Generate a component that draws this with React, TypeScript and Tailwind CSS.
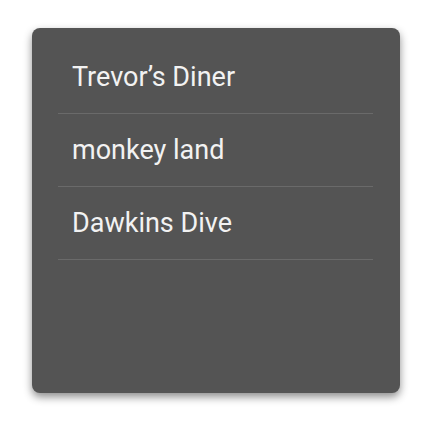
const places = ['Trevor’s Diner', 'monkey land', 'Dawkins Dive'];

export default function App() {
  return (
    <div className="w-[432px] h-[432px] bg-white pt-[28px] pl-[32px]" style={{ fontFamily: 'Roboto, sans-serif' }}>
      <div className="w-[368px] h-[365px] bg-[#545454] rounded-[8px] shadow-[0_4px_8px_rgba(0,0,0,0.45)] pt-[13px] pl-[26px] pr-[27px]">
        {places.map((name) => (
          <div key={name} className="h-[73px] border-b border-[#6a6a6a] flex items-center pl-[14px]">
            <span className="text-[27px] text-[#f2f2f2] leading-none">{name}</span>
          </div>
        ))}
      </div>
    </div>
  );
}
